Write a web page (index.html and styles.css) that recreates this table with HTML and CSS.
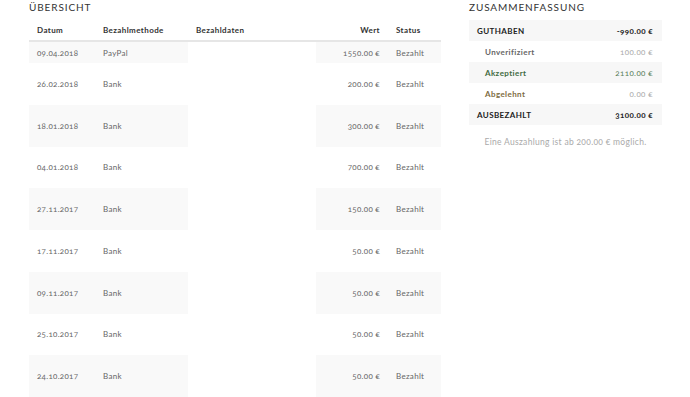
FILE: index.html
```html
<!DOCTYPE html>
<html lang="de">
<head>
<meta charset="utf-8">
<title>Übersicht</title>
<link rel="stylesheet" href="styles.css">
</head>
<body>
<div class="page">
  <section class="overview">
    <h2 class="title">ÜBERSICHT</h2>
    <table class="payments">
      <colgroup>
        <col class="c-date"><col class="c-method"><col class="c-data"><col class="c-value"><col class="c-status">
      </colgroup>
      <thead>
        <tr><th>Datum</th><th>Bezahlmethode</th><th>Bezahldaten</th><th class="num">Wert</th><th>Status</th></tr>
      </thead>
      <tbody>
        <tr class="short"><td>09.04.2018</td><td>PayPal</td><td class="data"></td><td class="num">1550.00 €</td><td>Bezahlt</td></tr>
        <tr><td>26.02.2018</td><td>Bank</td><td class="data"></td><td class="num">200.00 €</td><td>Bezahlt</td></tr>
        <tr><td>18.01.2018</td><td>Bank</td><td class="data"></td><td class="num">300.00 €</td><td>Bezahlt</td></tr>
        <tr><td>04.01.2018</td><td>Bank</td><td class="data"></td><td class="num">700.00 €</td><td>Bezahlt</td></tr>
        <tr><td>27.11.2017</td><td>Bank</td><td class="data"></td><td class="num">150.00 €</td><td>Bezahlt</td></tr>
        <tr><td>17.11.2017</td><td>Bank</td><td class="data"></td><td class="num">50.00 €</td><td>Bezahlt</td></tr>
        <tr><td>09.11.2017</td><td>Bank</td><td class="data"></td><td class="num">50.00 €</td><td>Bezahlt</td></tr>
        <tr><td>25.10.2017</td><td>Bank</td><td class="data"></td><td class="num">50.00 €</td><td>Bezahlt</td></tr>
        <tr><td>24.10.2017</td><td>Bank</td><td class="data"></td><td class="num">50.00 €</td><td>Bezahlt</td></tr>
      </tbody>
    </table>
  </section>
  <aside class="summary">
    <h2 class="title">ZUSAMMENFASSUNG</h2>
    <div class="sum-box">
      <div class="sum-row main shaded"><span>GUTHABEN</span><span>-990.00 €</span></div>
      <div class="sum-row sub"><span>Unverifiziert</span><span class="val">100.00 €</span></div>
      <div class="sum-row sub ok shaded"><span>Akzeptiert</span><span class="val">2110.00 €</span></div>
      <div class="sum-row sub bad"><span>Abgelehnt</span><span class="val">0.00 €</span></div>
      <div class="sum-row main shaded"><span>AUSBEZAHLT</span><span>3100.00 €</span></div>
    </div>
    <p class="note">Eine Auszahlung ist ab 200.00 € möglich.</p>
  </aside>
</div>
</body>
</html>
```
FILE: styles.css
```css
html, body {
  margin: 0;
  padding: 0;
  background: #fff;
}
body {
  font-family: "Lato", "Open Sans", "Liberation Sans", sans-serif;
  font-variant-numeric: oldstyle-nums;
  color: #555;
  font-size: 8px;
}
.page {
  display: flex;
  gap: 28px;
  padding-left: 29px;
}
.overview {
  width: 412px;
  flex: none;
}
.summary {
  width: 193px;
  flex: none;
}
.title {
  margin: 0;
  height: 20px;
  line-height: 15px;
  font-size: 10px;
  font-weight: 400;
  letter-spacing: 0.9px;
  color: #333;
}
.payments {
  width: 412px;
  border-collapse: collapse;
  table-layout: fixed;
}
.c-date { width: 66px; }
.c-method { width: 93px; }
.c-data { width: 128px; }
.c-value { width: 72px; }
.c-status { width: 53px; }
.payments th {
  height: 20px;
  padding: 0 8px;
  text-align: left;
  font-weight: 700;
  color: #333;
  letter-spacing: 0.4px;
  border-bottom: 2px solid #e6e6e6;
}
.payments td {
  height: 41.75px;
  padding: 0 8px;
  vertical-align: middle;
  color: #666;
  letter-spacing: 0.3px;
}
.payments tr.short td {
  height: 21px;
}
.payments tbody tr:nth-child(odd) td {
  background: #f9f9f9;
}
.payments tbody tr:nth-child(odd) td.data {
  background: #fff;
}
.payments .num {
  text-align: right;
}
.sum-box {
  display: flex;
  flex-direction: column;
}
.sum-row {
  height: 21px;
  display: flex;
  align-items: center;
  justify-content: space-between;
  padding: 0 9px 0 8px;
  font-weight: 700;
  letter-spacing: 0.4px;
}
.sum-row.shaded {
  background: #f7f7f7;
}
.sum-row.main {
  color: #222;
}
.sum-row.sub {
  padding-left: 16px;
  color: #666;
}
.sum-row .val {
  font-weight: 400;
  color: #aaa;
}
.sum-row.ok {
  color: #3f6b3f;
}
.sum-row.ok .val {
  color: #5b7f5b;
}
.sum-row.bad {
  color: #7d6b3e;
}
.note {
  margin: 12px 0 0;
  text-align: center;
  color: #aaa;
  font-size: 8.5px;
  letter-spacing: 0.3px;
}
```
